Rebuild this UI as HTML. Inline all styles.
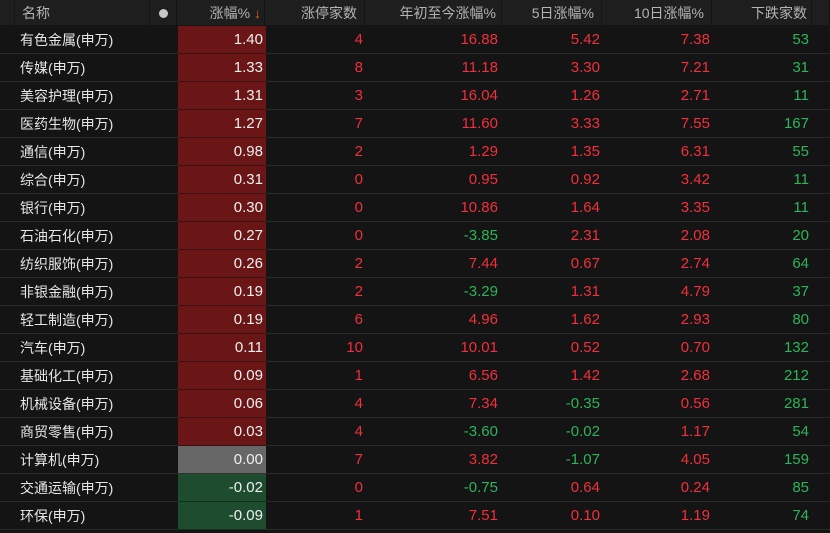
<!DOCTYPE html><html><head><meta charset="utf-8"><style>
body{margin:0;background:#141414;width:830px;height:533px;overflow:hidden;font-family:"Liberation Sans","Noto Sans CJK SC",sans-serif;font-size:14px}
table{border-collapse:separate;border-spacing:0;table-layout:fixed;width:830px}
td,th{padding:0;white-space:nowrap;overflow:hidden;box-sizing:border-box}
th{height:26px;background:#1e1e1e;color:#b4b4b4;font-weight:normal;border-right:1px solid #141414;text-align:right;padding-right:7px;border-bottom:1px solid #141414}
td{height:28px;border-bottom:1px solid #2a2a2a;text-align:right;padding-right:7px;font-size:15px}
td.n{text-align:left;padding-left:20px;color:#e6e6e6;font-size:14px}
.r{color:#f0303c}.g{color:#2db35a}
td.p{color:#f0f0f0;background:#6a1616;border-bottom:1px solid #3a1010;padding-right:3px}
td.z{background:#676767;border-bottom-color:#333}
td.m{background:#1d4c2f;border-bottom-color:#10301c}
.dot{display:inline-block;width:9px;height:9px;border-radius:50%;background:#c8c8c8}
</style></head><body>
<table>
<colgroup><col width="15"><col width="135"><col width="27"><col width="88"><col width="100"><col width="137"><col width="100"><col width="110"><col width="100"><col width="18"></colgroup>
<tr><th></th><th style="text-align:left;padding-left:7px">名称</th><th style="text-align:center;padding:0"><span class="dot"></span></th><th style="padding-right:3px">涨幅% <span style="color:#f05a28">↓</span></th><th>涨停家数</th><th style="padding-right:5px">年初至今涨幅%</th><th>5日涨幅%</th><th>10日涨幅%</th><th style="padding-right:4px">下跌家数</th><th></th></tr>
</table>
<table id="b">
<colgroup><col width="178"><col width="88"><col width="100"><col width="137"><col width="100"><col width="110"><col width="100"><col width="17"></colgroup>
</table>
<script>
var d=[["有色金属(申万)","1.40",4,"16.88","5.42","7.38",53],["传媒(申万)","1.33",8,"11.18","3.30","7.21",31],["美容护理(申万)","1.31",3,"16.04","1.26","2.71",11],["医药生物(申万)","1.27",7,"11.60","3.33","7.55",167],["通信(申万)","0.98",2,"1.29","1.35","6.31",55],["综合(申万)","0.31",0,"0.95","0.92","3.42",11],["银行(申万)","0.30",0,"10.86","1.64","3.35",11],["石油石化(申万)","0.27",0,"-3.85","2.31","2.08",20],["纺织服饰(申万)","0.26",2,"7.44","0.67","2.74",64],["非银金融(申万)","0.19",2,"-3.29","1.31","4.79",37],["轻工制造(申万)","0.19",6,"4.96","1.62","2.93",80],["汽车(申万)","0.11",10,"10.01","0.52","0.70",132],["基础化工(申万)","0.09",1,"6.56","1.42","2.68",212],["机械设备(申万)","0.06",4,"7.34","-0.35","0.56",281],["商贸零售(申万)","0.03",4,"-3.60","-0.02","1.17",54],["计算机(申万)","0.00",7,"3.82","-1.07","4.05",159],["交通运输(申万)","-0.02",0,"-0.75","0.64","0.24",85],["环保(申万)","-0.09",1,"7.51","0.10","1.19",74]];
var h="";function c(v){return v[0]=="-"?"g":"r"}
d.forEach(function(x){var pc=x[1]=="0.00"?"p z":x[1][0]=="-"?"p m":"p";
h+='<tr><td class="n">'+x[0]+'</td><td class="'+pc+'">'+x[1]+'</td><td class="r" style="padding-right:3px">'+x[2]+'</td><td class="'+c(x[3])+'" style="padding-right:5px">'+x[3]+'</td><td class="'+c(x[4])+'" style="padding-right:3px">'+x[4]+'</td><td class="'+c(x[5])+'" style="padding-right:3px">'+x[5]+'</td><td class="g" style="padding-right:4px">'+x[6]+'</td><td></td></tr>'});
document.getElementById("b").insertAdjacentHTML("beforeend",h);
</script>
</body></html>
